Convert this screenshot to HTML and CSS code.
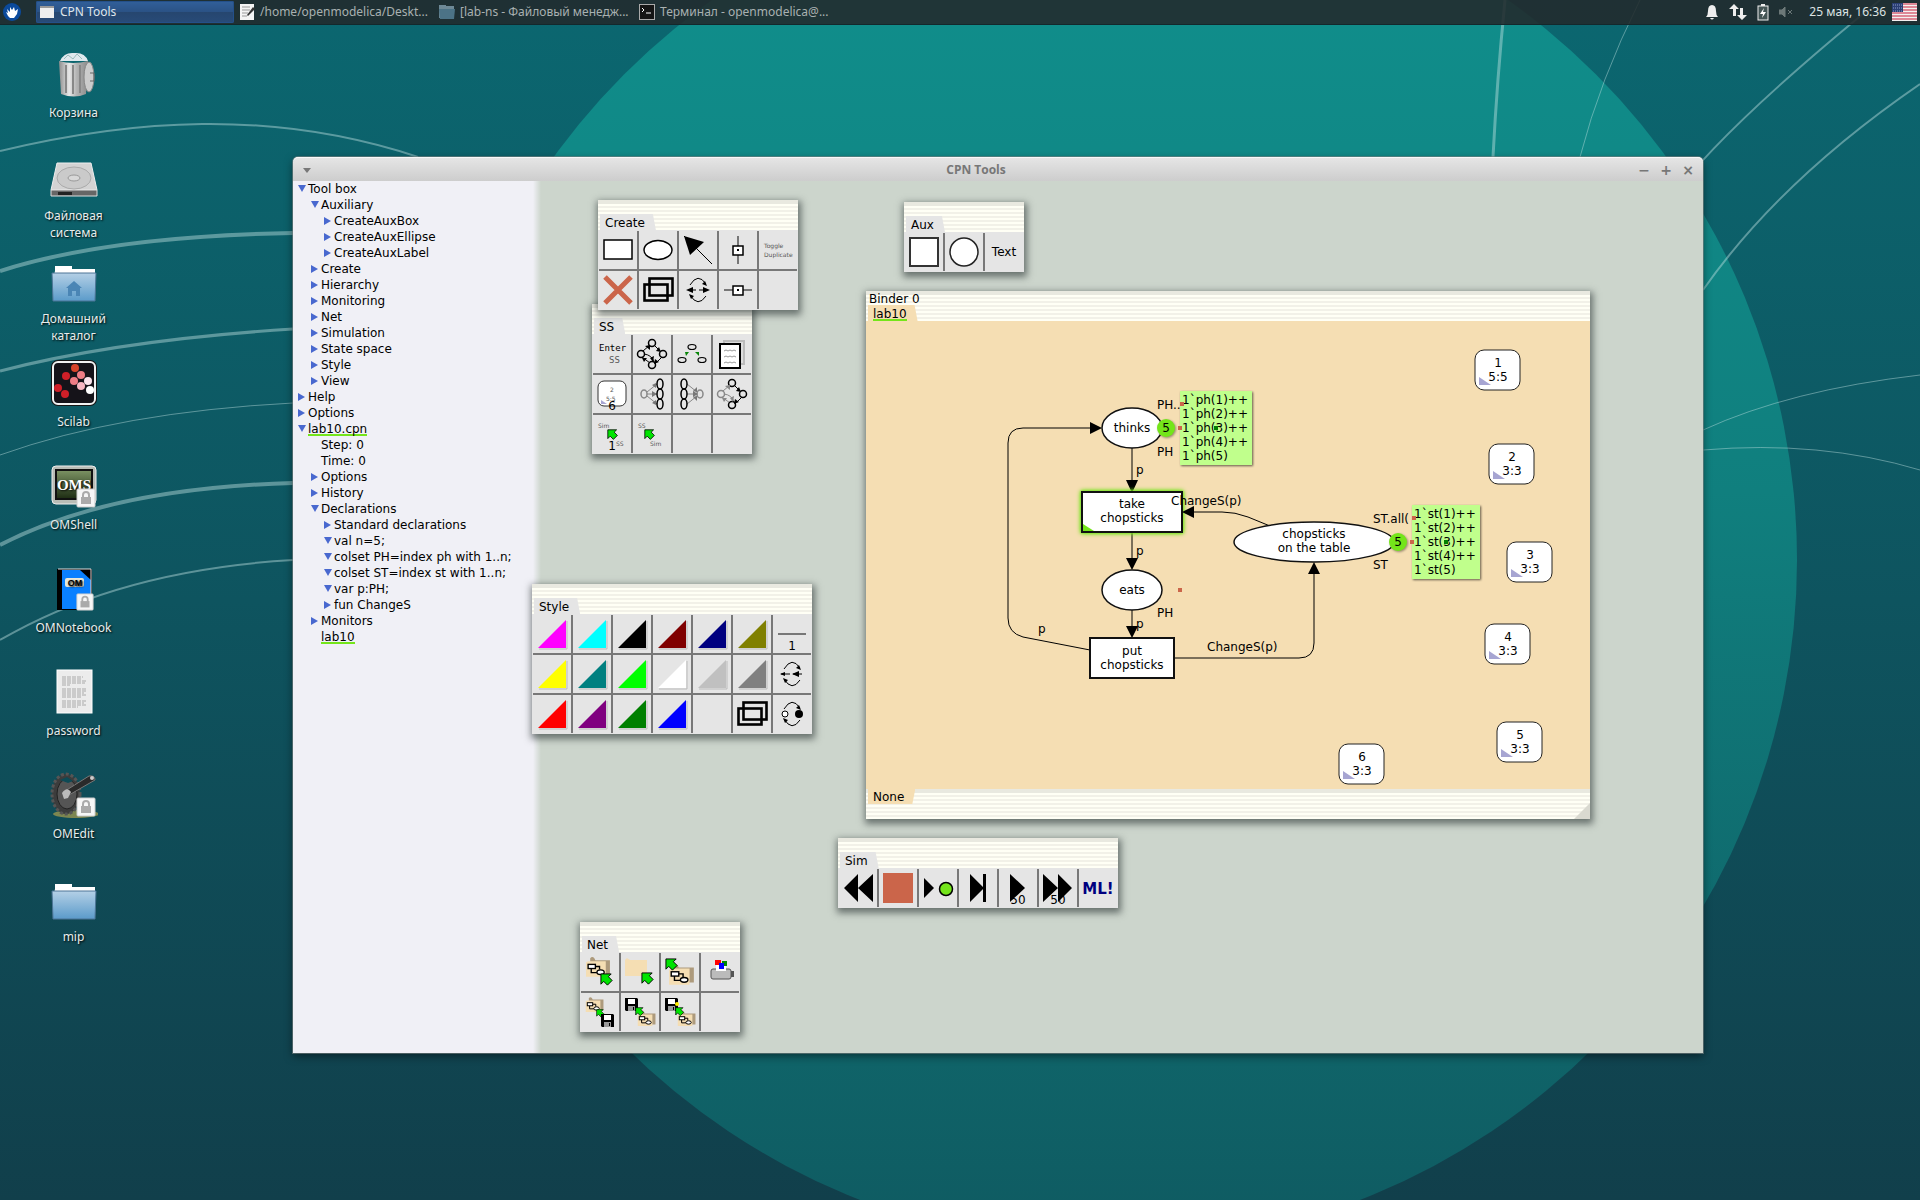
FILE: index.html
```html
<!DOCTYPE html>
<html lang="ru">
<head>
<meta charset="utf-8">
<title>CPN Tools</title>
<link rel="stylesheet" href="styles.css">
</head>
<body>
<svg class="wallpaper" viewBox="0 0 1920 1200" preserveAspectRatio="xMidYMid slice" aria-hidden="true">
  <defs>
    <linearGradient id="wall" x1="0" y1="0" x2="0" y2="1"><stop offset="0" stop-color="#0b6770"/><stop offset=".5" stop-color="#0e545f"/><stop offset="1" stop-color="#113f4b"/></linearGradient>
    <linearGradient id="disc" x1="0" y1="0" x2="0" y2="1"><stop offset="0" stop-color="#10918e"/><stop offset=".45" stop-color="#107f7e"/><stop offset="1" stop-color="#0f5a61"/></linearGradient>
  </defs>
  <rect width="1920" height="1200" fill="url(#wall)"/>
  <circle cx="1110" cy="560" r="687" fill="url(#disc)"/>
  <g fill="none" stroke="#bfe0e0" stroke-opacity=".45">
    <path d="M0 151C130 120 270 108 418 157" stroke-width="2"/>
    <path d="M0 271Q110 236 293 233" stroke-width="4"/>
    <path d="M0 371Q120 340 293 329" stroke-width="3"/>
    <path d="M0 455Q120 412 293 403" stroke-width="1"/>
    <path d="M0 545Q110 488 293 483" stroke-width="4"/>
    <path d="M0 640Q120 570 293 560" stroke-width="2"/>
    <path d="M1505 0Q1497 80 1493 157" stroke-width="3"/>
    <path d="M1640 0Q1600 80 1580 157" stroke-width="1"/>
    <path d="M1880 0Q1720 130 1670 200" stroke-width="2"/>
    <path d="M1920 84Q1780 180 1703 290" stroke-width="2"/>
    <path d="M1703 430Q1790 390 1920 375" stroke-width="1"/>
    <path d="M1703 450Q1820 440 1920 470" stroke-width="1"/>
  </g>
</svg>

<svg class="sprite" aria-hidden="true">
  <defs>
    <linearGradient id="metal"><stop offset="0" stop-color="#8d8d8d"/><stop offset=".35" stop-color="#e8e8e8"/><stop offset=".6" stop-color="#b5b5b5"/><stop offset="1" stop-color="#8a8a8a"/></linearGradient>
    <linearGradient id="blue" x1="0" y1="0" x2="0" y2="1"><stop offset="0" stop-color="#b4d0e6"/><stop offset="1" stop-color="#5b9bca"/></linearGradient>
    <linearGradient id="screen" x1="0" y1="0" x2="0" y2="1"><stop offset="0" stop-color="#7d9464"/><stop offset="1" stop-color="#1c2b12"/></linearGradient>
  </defs>
  <symbol id="lock" viewBox="0 0 20 20"><rect x="1" y="1" width="18" height="18" rx="1" fill="#f6f6f6" stroke="#ccc"/><path d="M7 10V7a3 3 0 0 1 6 0v3" fill="none" stroke="#aaa" stroke-width="2"/><rect x="5" y="9" width="10" height="7" fill="#aaa"/></symbol>
  <symbol id="folder" viewBox="0 0 48 48"><path d="M5 15V10h17v3h23v6H4z" fill="#fff"/><path d="M2 17h44l-1 28H3z" fill="url(#blue)" stroke="#4c7596" stroke-width="1"/></symbol>
  <symbol id="curves" viewBox="0 0 40 40"><g fill="none" stroke="#000" stroke-width="1"><path d="M12 15Q20 2 28 14M12 25Q20 38 28 26"/></g><path d="M29 16l-5-2 3-3zM11 24l5 2-3 3z"/></symbol>
  <symbol id="copies" viewBox="0 0 40 40"><g fill="none" stroke="#000" stroke-width="2.6"><rect x="11.500" y="8.500" width="23" height="17"/><rect x="6.500" y="14.500" width="23" height="16"/></g></symbol>
  <symbol id="garrow" viewBox="-1 -1 15 15"><path d="M0 0H11L8 3L12 7L7 12L3 8L0 11Z" fill="#00e400" stroke="#000" stroke-width="1"/></symbol>
  <symbol id="files" viewBox="0 0 26 20"><path d="M5 3V1q2-2 4 0l1 2h14v14H5z" fill="#ad9a7c"/><path d="M1 5l2-1h17v15H1z" fill="#f5deb3"/><g fill="#fff" stroke="#000" stroke-width="1.3"><path d="M6 11v4h6M10 9h4v3" fill="none"/><rect x="3" y="7" width="7" height="4"/><ellipse cx="15" cy="14.500" rx="3.500" ry="2.200"/></g></symbol>
  <symbol id="floppy" viewBox="0 0 13 13"><path d="M0 0h12l1 1v12H1L0 12z"/><path d="M3 1h7v5H3z" fill="#fff"/><path d="M3 8h7v5H3z" fill="#999"/><path d="M8 9h1v3H8z"/></symbol>
  <symbol id="swatch" viewBox="0 0 40 40"><path d="M35 7V35H7" fill="none" stroke="#bbb" stroke-width="1"/><path d="M6 34L34 6V34Z" fill="currentColor"/></symbol>
  <symbol id="node" viewBox="0 0 47 42"><rect x="1" y="1" width="45" height="40" rx="9" fill="#fff" stroke="#222"/><path d="M5 28v8h12z" fill="#a7a5d2"/></symbol>
</svg>

<header class="panel">
  <button class="whisker" aria-label="Menu"><svg width="19" height="19" viewBox="0 0 19 19"><circle cx="9" cy="9" r="9" fill="#0b4a9c"/><path d="M5 13l-2-4 2 1-1-4 3 3V4l2 3 2-3 1 4 3-2-1 5-3 4H7z" fill="#fff"/></svg></button>
  <nav class="tasks">
    <button class="task active"><svg width="16" height="16" viewBox="0 0 16 16"><rect x="1" y="2" width="14" height="12" fill="#eee"/><path d="M1 2h14v2H1z" fill="#999"/></svg>CPN Tools</button>
    <button class="task"><svg width="16" height="18" viewBox="0 0 16 18"><rect x="1" y="1" width="14" height="16" fill="#f4f4f4"/><path d="M3 4h8M3 7h8M3 10h6M3 13h5" stroke="#999"/><path d="M8 12L14 4l2 2-7 7z" fill="#333"/></svg>/home/openmodelica/Deskt...</button>
    <button class="task"><svg width="16" height="16" viewBox="0 0 16 16"><path d="M0 3V1h7v1h8v12H0z" fill="#6e8996"/><path d="M0 5h16l-1 10H1z" fill="#4c7386"/></svg>[lab-ns - Файловый менедж...</button>
    <button class="task"><svg width="16" height="16" viewBox="0 0 16 16"><rect x=".5" y=".5" width="15" height="15" fill="#151515" stroke="#aaa"/><path d="M3 4l2 2-2 2M7 9h5" stroke="#fff" fill="none"/></svg>Терминал - openmodelica@...</button>
  </nav>
  <div class="tray">
    <svg width="14" height="16" viewBox="0 0 14 16"><path d="M7 1q4 0 4 6 0 4 2 6H1q2-2 2-6 0-6 4-6zM5 14h4q-2 3-4 0z" fill="#eee"/></svg>
    <svg width="18" height="18" viewBox="0 0 18 18"><path d="M5 1l5 5H7v7H4V6H0zM13 17l-5-5h3V5h3v7h4z" fill="#eee"/></svg>
    <svg width="12" height="18" viewBox="0 0 12 18"><path d="M4 1h4v2H4z" fill="#eee"/><rect x="1" y="3" width="10" height="14" fill="#455" stroke="#eee"/><path d="M7 5L3 11h3l-1 4 4-6H6z" fill="#fff"/></svg>
    <svg width="14" height="12" viewBox="0 0 14 12"><path d="M0 4h3l3-3v10L3 8H0zM9 4l4 4M13 4l-4 4" fill="#6c7878" stroke="#6c7878" stroke-width="1"/></svg>
    <time class="clock">25 мая, 16:36</time>
    <svg width="25" height="18" viewBox="0 0 25 18"><rect width="25" height="18" fill="#f4f0f0"/><path d="M0 1h25M0 4h25M0 7h25M0 10h25M0 13h25M0 16h25" stroke="#c8203c"/><path d="M0 0h11v9H0z" fill="#2b3f74"/><path d="M1 2h9M1 5h9M1 8h9" stroke="#8fa0c8" stroke-dasharray="1 1"/></svg>
  </div>
</header>

<main class="desktop">
  <ul class="shortcuts">
    <li><a href="#"><svg width="48" height="48" viewBox="0 0 48 48"><path d="M10 11q4-9 14-8 11-1 14 8z" fill="#dfe9ee"/><path d="M14 9l4-4 5 4 4-5 5 5" stroke="#9bb" fill="none"/><path d="M9 11q14 4 29 0l-2 33q-12 5-25 0z" fill="url(#metal)"/><path d="M16 15v28M23 15v29M30 15v28" stroke="#888" stroke-width="2"/><ellipse cx="39" cy="27" rx="5" ry="15" fill="#ccc" stroke="#888"/><path d="M40 23h4v8h-4" stroke="#666" fill="none"/></svg>Корзина</a></li>
    <li><a href="#"><svg width="48" height="48" viewBox="0 0 48 48"><path d="M7 10h34l6 27H1z" fill="#d3d3d3" stroke="#eee"/><path d="M1 37h46v6H1z" fill="#666" stroke="#ddd"/><path d="M8 39h14v3H8z" fill="#222"/><ellipse cx="24" cy="25" rx="17" ry="11" fill="#cacaca" stroke="#aaa"/><ellipse cx="24" cy="25" rx="6" ry="3" fill="#d8d8d8" stroke="#999"/></svg>Файловая<br>система</a></li>
    <li><a href="#"><svg width="48" height="48"><use href="#folder"/><path d="M24 25l8 7h-2v8h-4v-5h-4v5h-4v-8h-2z" fill="#4a85b5"/></svg>Домашний<br>каталог</a></li>
    <li><a href="#"><svg width="48" height="48" viewBox="0 0 48 48"><rect x="1" y="1" width="46" height="46" rx="7" fill="#151515"/><rect x="3" y="3" width="42" height="42" rx="5" fill="#151319" stroke="#f2f2f2" stroke-width="2"/><g fill="#cf1f28"><circle cx="25" cy="9" r="4" fill="#d7432a"/><circle cx="16" cy="17" r="4"/><circle cx="8" cy="29" r="4"/><circle cx="15" cy="35" r="4"/><circle cx="31" cy="16" r="4" fill="#ef7d86"/><circle cx="24" cy="22" r="4" fill="#ef7d86"/><circle cx="31" cy="27" r="4" fill="#f7b6c2"/><circle cx="38" cy="22" r="4" fill="#fbe4ec"/><circle cx="40" cy="31" r="4" fill="#fff"/></g></svg>Scilab</a></li>
    <li><a href="#"><svg width="48" height="48" viewBox="0 0 48 48"><rect x="2" y="4" width="44" height="38" rx="4" fill="#b9bdb6" stroke="#eee"/><rect x="6" y="8" width="36" height="29" fill="url(#screen)" stroke="#111" stroke-width="2"/><text x="24" y="28" class="oms">OMS</text><use href="#lock" x="26" y="26" width="20" height="20"/></svg>OMShell</a></li>
    <li><a href="#"><svg width="48" height="48" viewBox="0 0 48 48"><path d="M7 4h35v41H7z" fill="#000"/><path d="M12 5h18l11 10v29H12z" fill="#0a80ff"/><path d="M8 4h33v32" fill="none" stroke="#ddd"/><rect x="15" y="13" width="19" height="9" rx="2" fill="#e8e8d8"/><text x="25" y="21" class="om">OM</text><use href="#lock" x="26" y="28" width="18" height="18"/></svg>OMNotebook</a></li>
    <li><a href="#"><svg width="48" height="48" viewBox="0 0 48 48"><rect x="7" y="2" width="35" height="43" fill="#ececec" stroke="#fff"/><path d="M12 9h21M12 11h19M12 13h24M12 15h23M12 17h8M12 21h25M12 23h24M12 25h22M12 27h24M12 29h20M12 33h25M12 35h22M12 37h24M12 39h16" stroke="#aaa" stroke-dasharray="4 1"/></svg>password</a></li>
    <li><a href="#"><svg width="48" height="48" viewBox="0 0 48 48"><ellipse cx="26" cy="43" rx="23" ry="4" fill="#7d8650"/><ellipse cx="16" cy="23" rx="14" ry="20" fill="#3c3c3c" stroke="#555" stroke-width="3" stroke-dasharray="3 2"/><ellipse cx="17" cy="23" rx="10" ry="15" fill="#555" stroke="#222"/><path d="M10 9l7-3 6 4-5 2z" fill="#0e4a55"/><path d="M15 20l24-15q6-1 6 4l-26 15z" fill="#2a2a2a" stroke="#777"/><circle cx="42" cy="7" r="2" fill="#ccc"/><path d="M12 22q5-7 9-1l-3 6-4 1z" fill="#bbb"/><use href="#lock" x="26" y="26" width="20" height="20"/></svg>OMEdit</a></li>
    <li><a href="#"><svg width="48" height="48"><use href="#folder"/></svg>mip</a></li>
  </ul>

  <section class="window">
    <header class="titlebar">
      <button class="menu-btn" aria-label="Window menu"></button>
      <h1>CPN Tools</h1>
      <div class="controls"><button aria-label="Minimize">−</button><button aria-label="Maximize">+</button><button aria-label="Close">×</button></div>
    </header>
    <div class="body">
      <aside class="index">
        <ul class="tree">
          <li class="open">Tool box
            <ul>
              <li class="open">Auxiliary<ul><li class="shut">CreateAuxBox</li><li class="shut">CreateAuxEllipse</li><li class="shut">CreateAuxLabel</li></ul></li>
              <li class="shut">Create</li><li class="shut">Hierarchy</li><li class="shut">Monitoring</li><li class="shut">Net</li><li class="shut">Simulation</li><li class="shut">State space</li><li class="shut">Style</li><li class="shut">View</li>
            </ul></li>
          <li class="shut">Help</li>
          <li class="shut">Options</li>
          <li class="open"><span class="marked">lab10.cpn</span>
            <ul>
              <li>Step: 0</li><li>Time: 0</li><li class="shut">Options</li><li class="shut">History</li>
              <li class="open">Declarations<ul><li class="shut">Standard declarations</li><li class="open">val n=5;</li><li class="open">colset PH=index ph with 1..n;</li><li class="open">colset ST=index st with 1..n;</li><li class="open">var p:PH;</li><li class="shut">fun ChangeS</li></ul></li>
              <li class="shut">Monitors</li>
              <li><span class="marked">lab10</span></li>
            </ul></li>
        </ul>
      </aside>

      <section class="palette ss">
        <div class="strip"><span class="tab">SS</span></div>
        <div class="cells cols-4">
          <button><svg viewBox="0 0 40 40"><text x="7" y="17" class="mono">Enter</text><text x="17" y="29" class="mono dim">SS</text></svg></button>
          <button><svg viewBox="0 0 40 40"><g fill="none" stroke="#000" stroke-width="1"><path d="M11 17l7-6M22 11l7 7M30 23l-7 7M18 29l-8-6M12 20q8 1 10 8"/><g stroke-width="1.5"><circle cx="20" cy="9" r="3.5"/><circle cx="9" cy="20" r="3.5"/><circle cx="31" cy="20" r="3.5"/><circle cx="20" cy="31" r="3.5"/></g></g><path d="M18 11v5l-5-4zM29 18l-5-1 3-4zM22 30l1-5 4 3zM10 24h5l-3 4zM21 28l-3-4 4-2z"/></svg></button>
          <button><svg viewBox="0 0 40 40"><g fill="none" stroke="#000" stroke-width="1.2"><ellipse cx="20" cy="13" rx="4" ry="2.500"/><ellipse cx="10" cy="26" rx="4" ry="2.500"/><ellipse cx="30" cy="26" rx="4" ry="2.500"/></g><path d="M13 18h4l-3 4zM27 18h-4l4 4z" fill="#078507"/></svg></button>
          <button><svg viewBox="0 0 40 40"><rect x="12" y="7" width="20" height="23" fill="#ddd" stroke="#bbb" stroke-width="2"/><rect x="8" y="10" width="20" height="24" fill="#fff" stroke="#000" stroke-width="2"/><path d="M12 17l2-1 2 1 2-1 2 1 2-1 2 1M12 23l2-1 2 1 2-1 2 1 2-1 2 1M12 29l2-1 2 1 2-1 2 1 2-1 2 1" fill="none" stroke="#999"/></svg></button>
          <button><svg viewBox="0 0 40 40"><rect x="6" y="7" width="28" height="25" rx="6" fill="#fff" stroke="#333"/><path d="M9 26v4h6z" fill="#a7a5d2"/><text x="18" y="18" class="tiny">2</text><text x="14" y="27" class="tiny">5:5</text><text x="20" y="36" class="num">6</text></svg></button>
          <button><svg viewBox="0 0 40 40"><g fill="none" stroke="#888"><ellipse cx="12" cy="20" rx="3" ry="4" stroke-width="1.5"/><path d="M15 18l10-8M15 20h10M15 22l10 8"/></g><path d="M24 9v5l-4-3zM25 20l-5-3v6zM24 31v-5l-4 3z" fill="#777"/><g fill="none" stroke="#000" stroke-width="1.5"><ellipse cx="28" cy="10" rx="3" ry="5"/><ellipse cx="28" cy="20" rx="3" ry="5"/><ellipse cx="28" cy="30" rx="3" ry="5"/></g></svg></button>
          <button><svg viewBox="0 0 40 40"><g fill="none" stroke="#888"><ellipse cx="28" cy="20" rx="3" ry="4" stroke-width="1.5"/><path d="M25 18l-10-8M25 20H15M25 22l-10 8"/></g><path d="M25 18v-5l-4 4zM26 20l-5-3v6zM25 22v5l-4-4z" fill="#777"/><g fill="none" stroke="#000" stroke-width="1.5"><ellipse cx="12" cy="10" rx="3" ry="5"/><ellipse cx="12" cy="20" rx="3" ry="5"/><ellipse cx="12" cy="30" rx="3" ry="5"/></g></svg></button>
          <button><svg viewBox="0 0 40 40"><g fill="none" stroke="#000"><path d="M22 11l7 7M30 23l-7 7"/><path d="M11 17l7-6M18 29l-8-6M12 20q8 1 10 8" stroke="#888"/><g stroke-width="1.5"><circle cx="20" cy="9" r="3.5"/><circle cx="9" cy="20" r="3.5" stroke="#888"/><circle cx="31" cy="20" r="3.5"/><circle cx="20" cy="31" r="3.5"/></g></g><path d="M18 11v5l-5-4zM10 24h5l-3 4zM21 28l-3-4 4-2z" fill="#888"/><path d="M29 18l-5-1 3-4zM22 30l1-5 4 3z"/></svg></button>
          <button><svg viewBox="0 0 40 40"><text x="6" y="14" class="tiny">Sim</text><use href="#garrow" x="15" y="15" width="12" height="12"/><text x="24" y="32" class="tiny">SS</text><text x="20" y="36" class="num">1</text></svg></button>
          <button><svg viewBox="0 0 40 40"><text x="6" y="14" class="tiny">SS</text><use href="#garrow" x="12" y="15" width="12" height="12"/><text x="18" y="32" class="tiny">Sim</text></svg></button>
          <button aria-label="Empty"></button><button aria-label="Empty"></button>
        </div>
      </section>

      <section class="palette create">
        <div class="strip"><span class="tab">Create</span></div>
        <div class="cells cols-5">
          <button><svg viewBox="0 0 40 40"><rect x="6" y="10" width="28" height="19" fill="#fff" stroke="#000" stroke-width="1.5"/></svg></button>
          <button><svg viewBox="0 0 40 40"><ellipse cx="20" cy="20" rx="14" ry="9.5" fill="#fff" stroke="#000" stroke-width="1.5"/></svg></button>
          <button><svg viewBox="0 0 40 40"><path d="M6 6l28 28" stroke="#000"/><path d="M6 6l20 6-14 13z"/></svg></button>
          <button><svg viewBox="0 0 40 40"><path d="M20 6v28" stroke="#777" stroke-width="2"/><path d="M15 16h10v9H15z" fill="#fff" stroke="#000" stroke-width="1.5"/><path d="M19 19h2v2h-2z"/></svg></button>
          <button><svg viewBox="0 0 40 40"><text x="6" y="18" class="tiny">Toggle</text><text x="6" y="27" class="tiny">Duplicate</text></svg></button>
          <button><svg viewBox="0 0 40 40"><path d="M7 7l26 26M33 7L7 33" stroke="#cb654a" stroke-width="5"/></svg></button>
          <button><svg viewBox="0 0 40 40"><use href="#copies"/></svg></button>
          <button><svg viewBox="0 0 40 40"><use href="#curves"/><path d="M12 20h17" stroke="#000" stroke-dasharray="6 3"/><path d="M8 20l7-3v6zM32 20l-7-3v6z"/></svg></button>
          <button><svg viewBox="0 0 40 40"><path d="M6 20h28" stroke="#777" stroke-width="2"/><path d="M15 16h10v9H15z" fill="#fff" stroke="#000" stroke-width="1.5"/><path d="M19 19h2v2h-2z"/></svg></button>
          <button aria-label="Empty"></button>
        </div>
      </section>

      <section class="palette style">
        <div class="strip"><span class="tab">Style</span></div>
        <div class="cells cols-7">
          <button class="c-magenta"><svg><use href="#swatch"/></svg></button>
          <button class="c-cyan"><svg><use href="#swatch"/></svg></button>
          <button class="c-black"><svg><use href="#swatch"/></svg></button>
          <button class="c-maroon"><svg><use href="#swatch"/></svg></button>
          <button class="c-navy"><svg><use href="#swatch"/></svg></button>
          <button class="c-olive"><svg><use href="#swatch"/></svg></button>
          <button><svg viewBox="0 0 40 40"><path d="M6 20h28" stroke="#777" stroke-width="2"/><text x="20" y="36" class="num">1</text></svg></button>
          <button class="c-yellow"><svg><use href="#swatch"/></svg></button>
          <button class="c-teal"><svg><use href="#swatch"/></svg></button>
          <button class="c-lime"><svg><use href="#swatch"/></svg></button>
          <button class="c-white"><svg><use href="#swatch"/></svg></button>
          <button class="c-silver"><svg><use href="#swatch"/></svg></button>
          <button class="c-gray"><svg><use href="#swatch"/></svg></button>
          <button><svg viewBox="0 0 40 40"><use href="#curves"/><path d="M9 20h23" stroke="#000" stroke-dasharray="9 3"/><path d="M8 20l5-2v4zM20 20l7-3v6z"/></svg></button>
          <button class="c-red"><svg><use href="#swatch"/></svg></button>
          <button class="c-purple"><svg><use href="#swatch"/></svg></button>
          <button class="c-green"><svg><use href="#swatch"/></svg></button>
          <button class="c-blue"><svg><use href="#swatch"/></svg></button>
          <button aria-label="Empty"></button>
          <button><svg viewBox="0 0 40 40"><use href="#copies"/></svg></button>
          <button><svg viewBox="0 0 40 40"><use href="#curves"/><circle cx="13" cy="20" r="3" fill="#fff" stroke="#000"/><circle cx="27" cy="20" r="4"/></svg></button>
        </div>
      </section>

      <section class="palette aux">
        <div class="strip"><span class="tab">Aux</span></div>
        <div class="cells cols-3">
          <button><svg viewBox="0 0 40 40"><rect x="6" y="6" width="28" height="28" fill="#fff" stroke="#333" stroke-width="2"/></svg></button>
          <button><svg viewBox="0 0 40 40"><circle cx="20" cy="20" r="14" fill="#fff" stroke="#222" stroke-width="1.5"/></svg></button>
          <button>Text</button>
        </div>
      </section>

      <section class="palette sim">
        <div class="strip"><span class="tab">Sim</span></div>
        <div class="cells cols-7">
          <button><svg viewBox="0 0 40 40"><path d="M6 20L20 6v28zM20 20L35 6v28z"/></svg></button>
          <button><svg viewBox="0 0 40 40"><path d="M5 5h30v30H5z" fill="#cb654a"/></svg></button>
          <button><svg viewBox="0 0 40 40"><path d="M6 10l10 10L6 30z"/><circle cx="28" cy="21" r="6.5" fill="#74e51a" stroke="#000" stroke-width="1.5"/></svg></button>
          <button><svg viewBox="0 0 40 40"><path d="M12 6l14 14-14 14zM25 6h3v28h-3z"/></svg></button>
          <button><svg viewBox="0 0 40 40"><path d="M12 6l15 14-15 14z"/><text x="20" y="36" class="num">50</text></svg></button>
          <button><svg viewBox="0 0 40 40"><path d="M5 6l15 14L5 34zM20 6l14 14-14 14z"/><text x="20" y="36" class="num">50</text></svg></button>
          <button><svg viewBox="0 0 40 40"><text x="20" y="26" class="ml">ML!</text></svg></button>
        </div>
      </section>

      <section class="palette net">
        <div class="strip"><span class="tab">Net</span></div>
        <div class="cells cols-4">
          <button><svg viewBox="0 0 40 40"><use href="#files" x="5" y="5" width="27" height="21"/><use href="#garrow" x="20" y="21" width="14" height="14"/></svg></button>
          <button><svg viewBox="0 0 40 40"><path d="M5 8l2-2 3 2h17v16H5z" fill="#f5deb3"/><use href="#garrow" x="21" y="20" width="14" height="14"/></svg></button>
          <button><svg viewBox="0 0 40 40"><use href="#files" x="8" y="12" width="28" height="22"/><use href="#garrow" x="5" y="6" width="14" height="14"/></svg></button>
          <button><svg viewBox="0 0 40 40"><path d="M30 19h4v6h-4z" fill="#555"/><rect x="11" y="17" width="20" height="10" rx="2" fill="#bbb" stroke="#555"/><path d="M16 11h10v8H16z" fill="#fff"/><path d="M15 8h6v5h-6z" fill="#f00"/><path d="M22 9h5v5h-5z" fill="#080"/><path d="M19 11h5v6h-5z" fill="#00f"/></svg></button>
          <button><svg viewBox="0 0 40 40"><use href="#files" x="5" y="5" width="20" height="16"/><use href="#garrow" x="16" y="17" width="9" height="9"/><use href="#floppy" x="21" y="22" width="13" height="13"/></svg></button>
          <button><svg viewBox="0 0 40 40"><use href="#floppy" x="5" y="6" width="13" height="13"/><use href="#files" x="17" y="19" width="20" height="16"/><use href="#garrow" x="15" y="15" width="10" height="10"/></svg></button>
          <button><svg viewBox="0 0 40 40"><use href="#floppy" x="5" y="6" width="13" height="13"/><circle cx="17" cy="12" r="2" fill="#fe0"/><use href="#files" x="17" y="19" width="20" height="16"/><use href="#garrow" x="15" y="15" width="10" height="10"/></svg></button>
          <button aria-label="Empty"></button>
        </div>
      </section>

      <section class="palette binder">
        <div class="strip"><span class="caption">Binder 0</span><span class="tab"><span class="marked">lab10</span></span></div>
        <svg class="net-page" viewBox="866 321 724 468">
          <g class="arc">
            <path d="M1132 448V482M1132 532V560M1132 610V628"/>
            <path d="M1090 650L1023 637Q1008 633 1008 618V443Q1008 428 1023 428H1092"/>
            <path d="M1175 658H1299Q1314 658 1314 643V572"/>
            <path d="M1270 526L1248 517Q1235 512 1222 512H1192"/>
          </g>
          <path d="M1132 493l-6-13h12zM1132 570l-6-12h12zM1132 638l-6-12h12zM1102 428l-12-6v12zM1314 562l-6 12h12z"/>
          <rect class="enabled" x="1082" y="492" width="100" height="40"/>
          <path d="M1182 512l12-6v12z"/>
          <path d="M1083 524v7h11z" fill="#74e51a"/>
          <g class="shape">
            <ellipse cx="1132" cy="428" rx="30" ry="20"/><ellipse cx="1132" cy="590" rx="30" ry="20"/><ellipse cx="1314" cy="542" rx="80" ry="20"/>
            <rect x="1090" y="638" width="84" height="40"/>
          </g>
          <g class="mid">
            <text x="1132" y="432">thinks</text><text x="1132" y="508">take</text><text x="1132" y="522">chopsticks</text>
            <text x="1132" y="594">eats</text><text x="1132" y="655">put</text><text x="1132" y="669">chopsticks</text>
            <text x="1314" y="538">chopsticks</text><text x="1314" y="552">on the table</text>
          </g>
          <text x="1157" y="409">PH..</text><text x="1157" y="456">PH</text><text x="1157" y="617">PH</text>
          <text x="1373" y="523">ST.all(</text><text x="1373" y="569">ST</text>
          <text x="1136" y="474">p</text><text x="1136" y="555">p</text><text x="1136" y="628">p</text><text x="1038" y="633">p</text>
          <text x="1171" y="505">ChangeS(p)</text><text x="1207" y="651">ChangeS(p)</text>
          <g class="token"><circle cx="1166" cy="428" r="9"/><circle cx="1398" cy="542" r="9"/></g>
          <g class="mid"><text x="1166" y="432">5</text><text x="1398" y="546">5</text></g>
          <g class="marking"><rect x="1180" y="391" width="72" height="74"/><rect x="1412" y="505" width="68" height="74"/></g>
          <text x="1182" y="404">1`ph(1)++</text><text x="1182" y="418">1`ph(2)++</text><text x="1182" y="432">1`ph(3)++</text><text x="1182" y="446">1`ph(4)++</text><text x="1182" y="460">1`ph(5)</text>
          <text x="1414" y="518">1`st(1)++</text><text x="1414" y="532">1`st(2)++</text><text x="1414" y="546">1`st(3)++</text><text x="1414" y="560">1`st(4)++</text><text x="1414" y="574">1`st(5)</text>
          <path d="M1180 402h4v4h-4zM1178 426h4v4h-4zM1178 588h4v4h-4zM1412 516h4v4h-4zM1410 540h4v4h-4z" fill="#cb654a"/>
          <path d="M1214 426h4v4h-4zM1444 540h4v4h-4z" fill="#008000"/>
          <g class="mid">
            <use href="#node" x="1474" y="349" width="47" height="42"/><text x="1498" y="367">1</text><text x="1498" y="381">5:5</text>
            <use href="#node" x="1488" y="443" width="47" height="42"/><text x="1512" y="461">2</text><text x="1512" y="475">3:3</text>
            <use href="#node" x="1506" y="541" width="47" height="42"/><text x="1530" y="559">3</text><text x="1530" y="573">3:3</text>
            <use href="#node" x="1484" y="623" width="47" height="42"/><text x="1508" y="641">4</text><text x="1508" y="655">3:3</text>
            <use href="#node" x="1496" y="721" width="47" height="42"/><text x="1520" y="739">5</text><text x="1520" y="753">3:3</text>
            <use href="#node" x="1338" y="743" width="47" height="42"/><text x="1362" y="761">6</text><text x="1362" y="775">3:3</text>
          </g>
        </svg>
        <div class="strip foot"><span class="tab">None</span></div>
      </section>
    </div>
  </section>
</main>
</body>
</html>
```

FILE: styles.css
```css
* { box-sizing: border-box; }
body {
  margin: 0;
  min-height: 100vh;
  display: flex;
  flex-direction: column;
  font: 12px/16px "DejaVu Sans", sans-serif;
  color: #000;
  background: #0e545f;
}
button {
  font: inherit;
  color: inherit;
  border: 0;
  padding: 0;
  background: none;
}
ul { list-style: none; margin: 0; padding: 0; }
.wallpaper { position: absolute; inset: 0; width: 100%; height: 100%; }
.sprite { position: absolute; width: 0; height: 0; }

/* top panel */
.panel {
  position: relative;
  display: flex;
  align-items: center;
  height: 25px;
  padding: 0 3px;
  background: rgba(34, 41, 43, .88);
  border-bottom: 1px solid #14282c;
  color: #a9b1b1;
  font: 12px/24px "Noto Sans", sans-serif;
}
.whisker { display: flex; width: 33px; }
.tasks { display: flex; gap: 2px; }
.task {
  display: flex;
  align-items: center;
  gap: 5px;
  width: 198px;
  height: 22px;
  padding: 0 3px;
  white-space: nowrap;
}
.task svg { flex: none; }
.active {
  color: #dfe5ec;
  background: linear-gradient(#31609b, #2b5285 50%, #26466f 51%, #284b78);
  border-radius: 2px;
  box-shadow: inset 0 0 0 1px #24508a;
}
.tray {
  display: flex;
  align-items: center;
  gap: 10px;
  margin-left: auto;
}
.clock { color: #dde3e3; margin-left: 6px; }
.clock + svg { margin-left: -4px; }

/* desktop shortcuts */
.desktop { position: relative; flex: 1; }
.shortcuts {
  display: grid;
  grid-auto-rows: 103px;
  width: 147px;
  padding-top: 25px;
}
.shortcuts a {
  display: flex;
  flex-direction: column;
  align-items: center;
  text-align: center;
  color: #e6eded;
  text-decoration: none;
  font: 12px/17px "Noto Sans", sans-serif;
  text-shadow: 1px 1px 2px #000;
}
.shortcuts svg { margin-bottom: 6px; flex: none; }
.oms { font: bold 15px "Liberation Serif", serif; fill: #fff; text-anchor: middle; }
.om { font: bold 9px "Liberation Sans", sans-serif; text-anchor: middle; }

/* application window */
.window {
  position: absolute;
  inset: 132px 217px 147px 293px;
  display: flex;
  flex-direction: column;
  border-radius: 5px 5px 0 0;
  box-shadow: 0 0 0 1px rgba(120, 130, 130, .6), 0 3px 8px rgba(0, 0, 0, .5);
}
.titlebar {
  display: flex;
  align-items: center;
  height: 24px;
  padding: 2px 8px 0 10px;
  border-radius: 5px 5px 0 0;
  background: linear-gradient(#e6e6e6, #cdcdcd);
  box-shadow: inset 0 1px #f8f8f8;
  color: #777;
}
.titlebar h1 {
  flex: 1;
  margin: 0;
  font: bold 12px/22px "Open Sans", sans-serif;
  text-align: center;
  padding-left: 4px;
}
.menu-btn {
  border: 4px solid transparent;
  border-top: 5px solid #777;
  border-bottom: 0;
}
.controls { display: flex; gap: 8px; }
.controls button { width: 14px; font: bold 14px/20px "DejaVu Sans", sans-serif; }
.body {
  position: relative;
  flex: 1;
  background: #ccd5cc;
}
.index {
  width: 248px;
  height: 100%;
  background: linear-gradient(90deg, #f0f0f6 240px, #ccd5cc 248px);
}
.tree { padding-left: 15px; white-space: nowrap; }
.tree ul { padding-left: 13px; }
.tree li { position: relative; }
.open::before, .shut::before {
  content: "";
  position: absolute;
  left: -10px;
  top: 4px;
  border: 4px solid transparent;
}
.open::before { border-top: 7px solid #4868cf; border-bottom: 0; }
.shut::before { border-left: 7px solid #4868cf; border-right: 0; }
.marked { box-shadow: inset 0 -2px #74e51a; }

/* floating palettes */
.palette {
  position: absolute;
  box-shadow: 1px 3px 7px 2px rgba(40, 50, 50, .6);
}
.create { left: 305px; top: 19px; }
.ss { left: 299px; top: 123px; }
.style { left: 239px; top: 403px; }
.aux { left: 611px; top: 21px; }
.sim { left: 545px; top: 657px; }
.net { left: 287px; top: 741px; }
.binder { left: 573px; top: 110px; width: 724px; }
.strip {
  display: flex;
  flex-direction: column;
  align-items: flex-start;
  justify-content: flex-end;
  height: 30px;
  padding-left: 2px;
  background:
    linear-gradient(#e9e9e0 4px, transparent 4px),
    repeating-linear-gradient(#fffff5 0 2px, #f2f1e8 2px 4px);
}
.tab {
  height: 16px;
  padding: 0 11px 0 5px;
  line-height: 18px;
  background: #e5e5e5;
  clip-path: polygon(0 0, calc(100% - 3px) 0, 100% 100%, 0 100%);
}
.caption { height: 14px; padding-left: 1px; }
.cells {
  position: relative;
  display: grid;
  grid-auto-rows: 40px;
  background: #e5e5e5;
}
.cols-3 { grid-template-columns: repeat(3, 40px); }
.cols-4 { grid-template-columns: repeat(4, 40px); }
.cols-5 { grid-template-columns: repeat(5, 40px); }
.cols-7 { grid-template-columns: repeat(7, 40px); }
.cells button { box-shadow: inset 0 0 0 1px #787878; }
.cells svg { display: block; width: 40px; height: 40px; }
.cells::after {
  content: "";
  position: absolute;
  inset: 0;
  border: 1px solid #e5e5e5;
  pointer-events: none;
}
.mono { font: 9px "DejaVu Sans Mono", monospace; }
.dim { fill: #555; }
.tiny { font: 6px "DejaVu Sans", sans-serif; fill: #555; }
.num { text-anchor: middle; }
.ml {
  font: 900 15px "DejaVu Sans", sans-serif;
  fill: #000080;
  text-anchor: middle;
}
.c-magenta { color: #f0f; }
.c-cyan { color: #0ff; }
.c-black { color: #000; }
.c-maroon { color: #800000; }
.c-navy { color: #000080; }
.c-olive { color: #808000; }
.c-yellow { color: #ff0; }
.c-teal { color: #008080; }
.c-lime { color: #0f0; }
.c-white { color: #fff; }
.c-silver { color: #c0c0c0; }
.c-gray { color: #808080; }
.c-red { color: #f00; }
.c-purple { color: #800080; }
.c-green { color: #008000; }
.c-blue { color: #00f; }

/* net page */
.binder .tab { background: #f5deb3; }
.net-page { display: block; width: 100%; background: #f5deb3; }
.foot { position: relative; justify-content: flex-start; }
.foot .tab { height: 15px; line-height: 16px; clip-path: polygon(0 0, 100% 0, calc(100% - 3px) 100%, 0 100%); }
.foot::after {
  content: "";
  position: absolute;
  right: 0;
  bottom: 0;
  border: 8px solid transparent;
  border-right-color: #d9d9d0;
  border-bottom-color: #d9d9d0;
}
.arc { fill: none; stroke: #000; }
.mid text { text-anchor: middle; }
.shape { fill: #fff; stroke: #111; stroke-width: 2px; }
.shape ellipse { stroke-width: 1.5px; }
.enabled {
  fill: #fff;
  stroke: #111;
  stroke-width: 2px;
  filter: drop-shadow(0 0 2px #74e51a) drop-shadow(0 0 1px #74e51a);
}
.token { fill: #74e51a; filter: drop-shadow(1px 1px 1px rgba(0, 0, 0, .4)); }
.marking { fill: #c0ff8c; filter: drop-shadow(1px 1px 1px rgba(0, 0, 0, .6)); }
```
